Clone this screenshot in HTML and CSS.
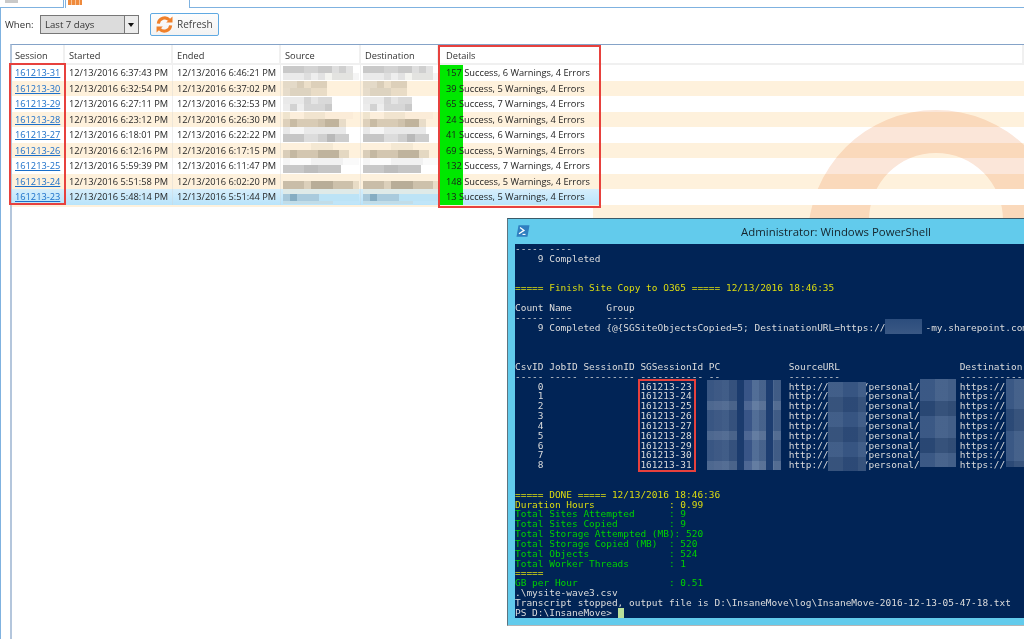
FILE: index.html
```html
<!DOCTYPE html>
<html lang="en">
<head>
<meta charset="utf-8">
<title>Administrator: Windows PowerShell</title>
<link rel="stylesheet" href="styles.css">
</head>
<body>
<div class="tabs">
  <div class="tab tab-first"><span class="tab-glyph"></span></div>
  <div class="tab tab-active"><span class="tab-bars"></span></div>
  <div class="tab-rest"></div>
</div>
<main class="pane">
  <div class="toolbar">
    <span class="when">When:</span>
    <div class="select"><span class="select-value">Last 7 days</span><span class="select-arrow"></span></div>
    <button class="refresh" type="button">
      <svg class="sync" viewBox="0 0 16 16" width="17" height="17" aria-hidden="true">
        <path d="M2.2 7.2A6 6 0 0 1 12.6 3.8" fill="none" stroke="#f0802a" stroke-width="2.9"/>
        <path d="M9.6 6.2h5.9V.4z" fill="#f0802a"/>
        <path d="M13.8 8.8A6 6 0 0 1 3.4 12.2" fill="none" stroke="#f0802a" stroke-width="2.9"/>
        <path d="M6.4 9.8H.5v5.8z" fill="#f0802a"/>
      </svg>
      <span>Refresh</span>
    </button>
  </div>
  <section class="grid">
    <svg class="watermark" viewBox="0 0 224 120" width="224" height="120" aria-hidden="true">
      <path fill="#fbe6d9" fill-rule="evenodd" d="M7 138a128 128 0 1 1 256 0a128 128 0 1 1-256 0zM68 120a67 67 0 1 0 134 0a67 67 0 1 0-134 0z"/>
    </svg>
    <div class="row head">
      <div class="c c-s">Session</div><div class="c">Started</div><div class="c">Ended</div><div class="c">Source</div><div class="c">Destination</div><div class="c c-d">Details</div><div class="c fill"></div>
    </div>
    <div class="row">
      <div class="c c-s"><a href="#">161213-31</a></div><div class="c">12/13/2016 6:37:43 PM</div><div class="c">12/13/2016 6:46:21 PM</div><div class="c"><div class="blur r1"></div></div><div class="c"><div class="blur r1"></div></div><div class="c c-d bar">157 Success, 6 Warnings, 4 Errors</div><div class="c fill"></div>
    </div>
    <div class="row alt">
      <div class="c c-s"><a href="#">161213-30</a></div><div class="c">12/13/2016 6:32:54 PM</div><div class="c">12/13/2016 6:37:02 PM</div><div class="c"><div class="blur r2"></div></div><div class="c"><div class="blur r2"></div></div><div class="c c-d bar">39 Success, 5 Warnings, 4 Errors</div><div class="c fill"></div>
    </div>
    <div class="row">
      <div class="c c-s"><a href="#">161213-29</a></div><div class="c">12/13/2016 6:27:11 PM</div><div class="c">12/13/2016 6:32:53 PM</div><div class="c"><div class="blur r3"></div></div><div class="c"><div class="blur r3"></div></div><div class="c c-d bar">65 Success, 7 Warnings, 4 Errors</div><div class="c fill"></div>
    </div>
    <div class="row alt">
      <div class="c c-s"><a href="#">161213-28</a></div><div class="c">12/13/2016 6:23:12 PM</div><div class="c">12/13/2016 6:26:30 PM</div><div class="c"><div class="blur r4"></div></div><div class="c"><div class="blur r4"></div></div><div class="c c-d bar">24 Success, 6 Warnings, 4 Errors</div><div class="c fill"></div>
    </div>
    <div class="row">
      <div class="c c-s"><a href="#">161213-27</a></div><div class="c">12/13/2016 6:18:01 PM</div><div class="c">12/13/2016 6:22:22 PM</div><div class="c"><div class="blur r5"></div></div><div class="c"><div class="blur r5"></div></div><div class="c c-d bar">41 Success, 6 Warnings, 4 Errors</div><div class="c fill"></div>
    </div>
    <div class="row alt">
      <div class="c c-s"><a href="#">161213-26</a></div><div class="c">12/13/2016 6:12:16 PM</div><div class="c">12/13/2016 6:17:15 PM</div><div class="c"><div class="blur r6"></div></div><div class="c"><div class="blur r6"></div></div><div class="c c-d bar">69 Success, 5 Warnings, 4 Errors</div><div class="c fill"></div>
    </div>
    <div class="row">
      <div class="c c-s"><a href="#">161213-25</a></div><div class="c">12/13/2016 5:59:39 PM</div><div class="c">12/13/2016 6:11:47 PM</div><div class="c"><div class="blur r7"></div></div><div class="c"><div class="blur r7"></div></div><div class="c c-d bar">132 Success, 7 Warnings, 4 Errors</div><div class="c fill"></div>
    </div>
    <div class="row alt">
      <div class="c c-s"><a href="#">161213-24</a></div><div class="c">12/13/2016 5:51:58 PM</div><div class="c">12/13/2016 6:02:20 PM</div><div class="c"><div class="blur r8"></div></div><div class="c"><div class="blur r8"></div></div><div class="c c-d bar">148 Success, 5 Warnings, 4 Errors</div><div class="c fill"></div>
    </div>
    <div class="row selected">
      <div class="c c-s"><a href="#">161213-23</a></div><div class="c">12/13/2016 5:48:14 PM</div><div class="c">12/13/2016 5:51:44 PM</div><div class="c"><div class="blur r9"></div></div><div class="c"><div class="blur r9"></div></div><div class="c c-d bar">13 Success, 5 Warnings, 4 Errors</div><div class="c fill blank"></div>
    </div>
    <div class="tail"><div class="tail-left"></div><div class="tail-right"></div></div>
  </section>
</main>
<div class="callout callout-session"></div>
<div class="callout callout-details"></div>
<section class="ps">
  <header class="ps-title">
    <svg class="ps-icon" viewBox="0 0 14 14" width="14" height="14" aria-hidden="true">
      <path d="M2.5 1.2h11L11.5 12.8H.5z" fill="#2f7fc0"/>
      <path d="M4 3.4l4 3-5 3.4" fill="none" stroke="#fff" stroke-width="1.3"/>
      <path d="M6.5 10.4h3" stroke="#fff" stroke-width="1.1"/>
    </svg>
    <h1>Administrator: Windows PowerShell</h1>
  </header>
  <div class="console">
<pre>----- ----
    9 Completed


<span class="y">===== Finish Site Copy to O365 ===== 12/13/2016 18:46:35</span>

Count Name      Group
----- ----      -----
    9 Completed {@{SGSiteObjectsCopied=5; DestinationURL=https://       -my.sharepoint.com



CsvID JobID SessionID SGSessionId PC            SourceURL                     Destination
----- ----- --------- ----------- --            ---------                     -----------
    0                 161213-23                 http://      /personal/       https://
    1                 161213-24                 http://      /personal/       https://
    2                 161213-25                 http://      /personal/       https://
    3                 161213-26                 http://      /personal/       https://
    4                 161213-27                 http://      /personal/       https://
    5                 161213-28                 http://      /personal/       https://
    6                 161213-29                 http://      /personal/       https://
    7                 161213-30                 http://      /personal/       https://
    8                 161213-31                 http://      /personal/       https://


<span class="y">===== DONE ===== 12/13/2016 18:46:36
Duration Hours             : 0.99</span>
<span class="g">Total Sites Attempted      : 9
Total Sites Copied         : 9
Total Storage Attempted (MB): 520
Total Storage Copied (MB)  : 520
Total Objects              : 524
Total Worker Threads       : 1</span>
<span class="y">=====</span>
<span class="g">GB per Hour                : 0.51</span>
.\mysite-wave3.csv
Transcript stopped, output file is D:\InsaneMove\log\InsaneMove-2016-12-13-05-47-18.txt
PS D:\InsaneMove&gt; <span class="cursor"> </span></pre>
    <div class="mask mask-top"></div>
    <div class="mask mask-pc"></div>
    <div class="mask mask-src"></div>
    <div class="mask mask-user"></div>
    <div class="mask mask-dst"></div>
    <div class="callout callout-ids"></div>
  </div>
</section>
</body>
</html>
```
FILE: styles.css
```css
* { box-sizing: border-box; }
html, body { margin: 0; height: 100%; }
body {
  position: relative;
  width: 1024px;
  height: 639px;
  overflow: hidden;
  display: flex;
  flex-direction: column;
  background: #fff;
  font-family: "Open Sans", "Liberation Sans", sans-serif;
  font-size: 9.25px;
  color: #262626;
}

/* tab strip */
.tabs { display: flex; height: 8px; flex: none; }
.tab { position: relative; height: 8px; background: #fff; border: 1px solid #7fb2e0; border-top: 0; }
.tab-first { width: 64px; border-left: 0; }
.tab-glyph { display: block; margin-left: 5px; width: 13px; height: 3px; background: #c9c9c9; }
.tab-active { width: 125px; margin-left: 1px; border-bottom: 0; }
.tab-bars {
  display: block;
  margin-left: 2px;
  width: 14px;
  height: 5px;
  background: repeating-linear-gradient(90deg, #ef8a3c 0 3px, #f7c49a 3px 4px);
}
.tab-rest { flex: 1; border-bottom: 1px solid #7fb2e0; }

/* page area */
.pane {
  position: relative;
  flex: 1;
  min-height: 0;
  display: flex;
  flex-direction: column;
  border-left: 1px solid #7fb2e0;
}
.toolbar { display: flex; align-items: center; height: 36px; flex: none; padding: 0 0 4px 4px; }
.when { width: 35px; font-size: 9.6px; color: #333; }
.select {
  display: flex;
  width: 99px;
  height: 19px;
  background: #dcdcdc;
  border: 1px solid #777;
}
.select-value { flex: 1; padding-left: 4px; font-size: 9.6px; line-height: 17px; color: #333; }
.select-arrow { position: relative; width: 14px; background: #ececec; border-left: 1px solid #777; }
.select-arrow::after {
  content: "";
  position: absolute;
  left: 3px;
  top: 7px;
  border: 3.5px solid transparent;
  border-top: 4px solid #111;
  border-bottom: 0;
}
.refresh {
  display: flex;
  align-items: center;
  gap: 4px;
  width: 69px;
  height: 23px;
  margin-left: 11px;
  padding: 0 0 0 5px;
  background: linear-gradient(#fdfdfd, #f2f2f2);
  border: 1px solid #5fa9e2;
  border-radius: 2px;
  font: 10px "Open Sans", "Liberation Sans", sans-serif;
  color: #444;
}
.sync { flex: none; }

/* data grid */
.grid {
  position: relative;
  flex: 1;
  min-height: 0;
  margin-left: 9px;
  border-top: 1px solid #85a3c8;
  border-left: 2px solid #b4c6dc;
  overflow: hidden;
}
.watermark { position: absolute; left: 789px; top: 55px; }
.row {
  position: relative;
  display: grid;
  grid-template-columns: 53px 108px 108px 80px 78px 161px 1fr;
  height: 15.5px;
  line-height: 15px;
  white-space: nowrap;
}
.head { height: 20px; line-height: 21px; color: #333; border-bottom: 2px solid #f0f0f0; background: transparent; }
.alt { background: #fef1dc; mix-blend-mode: multiply; }
.selected { background: linear-gradient(#d6eefb, #b9e4fb); }
.c { padding-left: 4px; border-right: 1px solid rgba(210, 210, 210, .35); overflow: hidden; }
.c-s { padding-left: 3px; }
.c-d { padding-left: 7px; border-right: 0; }
.head .c { border-right: 2px solid #f0f0f0; }
.head .c-d { border-right: 0; }
.fill { border-right: 0; }
.bar { background: linear-gradient(#00e800, #00e800) 1px 0 / 23px 100% no-repeat; color: #1c1c1c; }
a { color: #1b6fc9; }
.blank { background: #fff; }
.tail { display: flex; height: 15.5px; }
.tail-left { width: 581px; height: 2px; background: #fef1dc; }
.tail-right { flex: 1; background: #fef1dc; mix-blend-mode: multiply; }

/* blurred-out values */
.blur { height: 15px; width: 76px; margin-left: -2px; }
.r1 { background:
  linear-gradient(90deg, #c9c9c9 0 21px, #d3d3d3 21px 35px, #c9c9c9 35px 49px, #dedede 49px 56px, #cfcfcf 56px 63px, #e2e2e2 63px 70px, #fff 70px) 0 1px / 100% 7px no-repeat,
  linear-gradient(90deg, #eaeaea 0 21px, #dedede 21px 28px, #eeeeee 28px 35px, #e2e2e2 35px 42px, #f4f4f0 42px 49px, #e3e3e0 49px 70px, #f5f5f5 70px) 0 8px / 100% 7px no-repeat; }
.r2 { background:
  linear-gradient(90deg, #e4dac8 0 14px, #d9cdb8 14px 21px, #ecdfc9 21px 28px, #ddd0ba 28px 44px, transparent 44px) 0 0 / 100% 7px no-repeat,
  linear-gradient(90deg, #e6dccb 0 7px, #ddd3c0 7px 28px, #e9dcc6 28px 44px, transparent 44px) 0 7px / 100% 8px no-repeat; }
.r3 { background:
  linear-gradient(90deg, #e9e9e9 0 21px, #d4d4d4 21px 28px, #e4e4e4 28px 35px, #d9d9d9 35px 49px, #fff 49px) 0 1px / 100% 7px no-repeat,
  linear-gradient(90deg, #ececec 0 7px, #d2d2d2 7px 14px, #eeeeee 14px 21px, #d6d6d6 21px 42px, #c9c9c9 42px 49px, #fff 49px) 0 8px / 100% 7px no-repeat; }
.r4 { background:
  linear-gradient(90deg, #efe4ce 0 7px, #fceedb 7px 21px, #f1e4cf 21px 42px, #fbecd8 42px 70px, transparent 70px) 0 0 / 100% 7px no-repeat,
  linear-gradient(90deg, #ddd0bb 0 7px, #c8bba4 7px 14px, #d8cbb5 14px 35px, #cfc2ac 35px 42px, #c0b39c 42px 56px, #e8dcc8 56px 63px, transparent 63px) 0 7px / 100% 8px no-repeat; }
.r5 { background:
  linear-gradient(90deg, #e8e8e8 0 7px, #f6f6f6 7px 21px, #e9e9e9 21px 63px, #fff 63px) 0 0 / 100% 7px no-repeat,
  linear-gradient(90deg, #c6c6c6 0 21px, #dcdcdc 21px 35px, #cfcfcf 35px 44px, #b9b9b9 44px 52px, #cdcdcd 52px 66px, #fff 66px) 0 7px / 100% 8px no-repeat; }
.r6 { background:
  linear-gradient(90deg, #fdf0dc 0 28px, #f4e8d3 28px 50px, transparent 50px) 0 0 / 100% 7px no-repeat,
  linear-gradient(90deg, #d9cdb9 0 7px, #c4b8a2 7px 14px, #d3c6b0 14px 35px, #bfb39d 35px 56px, #e4d8c2 56px 66px, transparent 66px) 0 7px / 100% 8px no-repeat; }
.r7 { background:
  linear-gradient(90deg, #f5f5f5 0 7px, #fbfbfb 7px 28px, #f1f1f1 28px 60px, #fafafa 60px) 0 0 / 100% 7px no-repeat,
  linear-gradient(90deg, #c8c8c8 0 21px, #bdbdbd 21px 35px, #c5c5c5 35px 58px, #fff 58px) 0 7px / 100% 8px no-repeat; }
.r8 { background:
  linear-gradient(90deg, #fdf1dd 0 76px) 0 0 / 100% 7px no-repeat,
  linear-gradient(90deg, #c9bda8 0 21px, #dcd0bb 21px 28px, #b8ad98 28px 50px, #cdc1ab 50px 70px, #e8dcc6 70px) 0 7px / 100% 8px no-repeat; }
.r9 { background:
  linear-gradient(90deg, #dfeae8 0 76px) 0 0 / 100% 5px no-repeat,
  linear-gradient(90deg, #a8c8da 0 7px, #86adc2 7px 14px, #aacbdd 14px 36px, #bce3f6 36px) 0 5px / 100% 7px no-repeat,
  linear-gradient(90deg, #c2dde8 0 50px, #c0e5f8 50px) 0 12px / 100% 3px no-repeat; }

/* annotation boxes */
.callout { position: absolute; border: 2px solid #e7413d; z-index: 3; pointer-events: none; }
.callout-session { left: 9px; top: 63px; width: 57px; height: 142px; }
.callout-details { left: 438px; top: 45px; width: 163px; height: 163px; }
.callout-ids { left: 123px; top: 135px; width: 58px; height: 93px; }

/* PowerShell window */
.ps {
  position: absolute;
  z-index: 2;
  left: 507px;
  top: 218px;
  width: 517px;
  height: 408px;
  display: flex;
  flex-direction: column;
  overflow: hidden;
  padding: 0 0 7px 7px;
  background: #62cbec;
  border-top: 1px solid #3b5a68;
  border-left: 1px solid #5c7480;
  border-bottom: 1px solid #b5b5b5;
}
.ps-title { position: relative; flex: none; height: 25px; padding-left: 133px; display: flex; align-items: center; justify-content: center; }
.ps-icon { position: absolute; left: 1px; top: 5px; }
.ps-title h1 { margin: 0; font-size: 11.4px; font-weight: 400; color: #14242c; }
.console { position: relative; flex: 1; min-height: 0; overflow: hidden; background: #012456; }
pre {
  margin: 0;
  font: 9.48px/9.83px "DejaVu Sans Mono", "Liberation Mono", monospace;
  color: #dcdcdc;
}
.y { color: #dcdc10; }
.g { color: #00d000; }
.cursor { display: inline-block; width: 6px; height: 10px; vertical-align: top; background: #b9e09a; }

.mask { position: absolute; background-color: #33517f; }
.mask-top { left: 370px; top: 75px; width: 37px; height: 15px; background: linear-gradient(#2c4d7d, #3a5884); }
.mask-pc {
  left: 192px; top: 136px; width: 74px; height: 90px;
  background:
    linear-gradient(90deg, transparent 0 30px, #1b3b6d 30px 37px, transparent 37px 59px, #1d3d70 59px 66px, transparent 66px),
    repeating-linear-gradient(180deg, rgba(255,255,255,.02) 0 21px, rgba(255,255,255,.12) 21px 30px),
    repeating-linear-gradient(90deg, rgba(255,255,255,.05) 0 7px, rgba(0,0,0,.04) 7px 15px),
    linear-gradient(90deg, #2a4a7a 0 7px, #3c5a88 7px 15px, #33517f 15px 30px, #37558a 37px 45px, #46638f 45px 59px, #3e5c88 66px);
}
.mask-src {
  left: 313px; top: 138px; width: 38px; height: 89px;
  background:
    repeating-linear-gradient(180deg, rgba(255,255,255,.04) 0 15px, rgba(0,0,0,.06) 15px 30px),
    linear-gradient(90deg, #3a5884 0 15px, #2f4e7d 15px 30px, #3a5884 30px);
}
.mask-user {
  left: 405px; top: 135px; width: 36px; height: 88px;
  background:
    repeating-linear-gradient(180deg, rgba(255,255,255,.07) 0 22px, rgba(0,0,0,.07) 22px 37px),
    linear-gradient(90deg, #2c4c7c 0 15px, #3a5884 15px 28px, #35537f 28px);
}
.mask-dst {
  left: 491px; top: 135px; width: 30px; height: 88px;
  background:
    repeating-linear-gradient(180deg, rgba(255,255,255,.06) 0 30px, rgba(0,0,0,.06) 30px 52px),
    linear-gradient(90deg, #2e4e7d 0 8px, #3a5884 8px);
}
```
